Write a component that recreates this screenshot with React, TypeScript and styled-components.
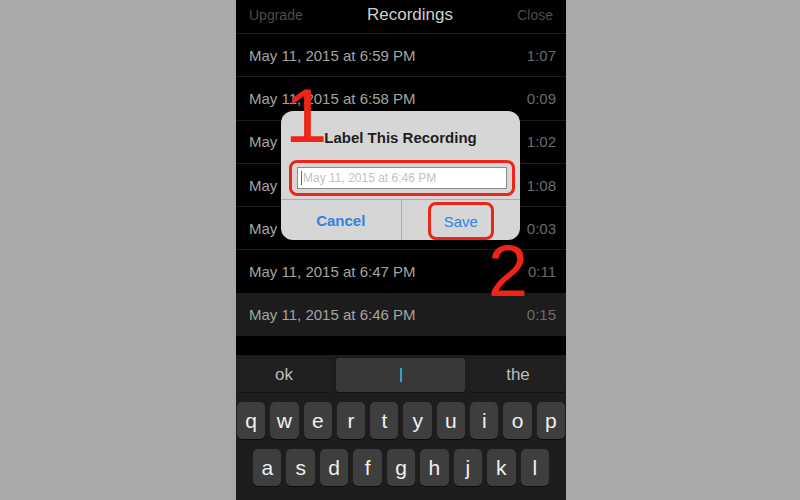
import React from "react";
import styled, { createGlobalStyle } from "styled-components";

const GlobalStyle = createGlobalStyle`
  html, body {
    margin: 0;
    padding: 0;
    background: #a9a9a9;
    font-family: "Liberation Sans", Arial, sans-serif;
  }
`;

const RED = "#ee2419";
const BLUE = "#2f82de";

const recordings = [
  { date: "May 11, 2015 at 6:59 PM", time: "1:07" },
  { date: "May 11, 2015 at 6:58 PM", time: "0:09" },
  { date: "May 11, 2015 at 6:57 PM", time: "1:02" },
  { date: "May 11, 2015 at 6:55 PM", time: "1:08" },
  { date: "May 11, 2015 at 6:50 PM", time: "0:03" },
  { date: "May 11, 2015 at 6:47 PM", time: "0:11" },
  { date: "May 11, 2015 at 6:46 PM", time: "0:15", active: true },
];

const topKeys = ["q", "w", "e", "r", "t", "y", "u", "i", "o", "p"];
const midKeys = ["a", "s", "d", "f", "g", "h", "j", "k", "l"];

const Page = styled.div`
  width: 800px;
  height: 500px;
  overflow: hidden;
  display: flex;
`;

const Phone = styled.div`
  position: relative;
  margin-left: 236px;
  width: 330px;
  height: 500px;
  background: #000;
  display: flex;
  flex-direction: column;
  overflow: hidden;
`;

const Header = styled.div`
  height: 29px;
  padding: 0 13px 4px;
  display: flex;
  align-items: center;
  justify-content: space-between;
`;

const NavLink = styled.span`
  color: #4b4b4b;
  font-size: 14px;
`;

const Title = styled.span`
  color: #cfcfcf;
  font-size: 17px;
`;

const List = styled.div`
  display: flex;
  flex-direction: column;
`;

const Row = styled.div<{ $active?: boolean }>`
  height: 42.3px;
  padding: 0 10px 0 13px;
  display: flex;
  align-items: center;
  justify-content: space-between;
  border-top: 1px solid #1b1b1b;
  background: ${(p) => (p.$active ? "#1c1c1c" : "transparent")};
`;

const DateText = styled.span`
  color: #a4a4a4;
  font-size: 15px;
`;

const Duration = styled.span`
  color: #6b6b6b;
  font-size: 15px;
`;

const Keyboard = styled.div`
  margin-top: auto;
  height: 142px;
  background: #1d1d1d;
  padding-top: 3px;
  display: flex;
  flex-direction: column;
  gap: 10px;
`;

const Suggestions = styled.div`
  display: grid;
  grid-template-columns: 94px 1fr 96px;
  gap: 5px;
  padding: 0 0 0 1px;
  height: 34px;
`;

const Suggestion = styled.div<{ $current?: boolean }>`
  display: flex;
  align-items: center;
  justify-content: center;
  border-radius: 3px;
  background: ${(p) => (p.$current ? "#383838" : "#202020")};
  box-shadow: 0 1px 0 #111;
  color: #bdbdbd;
  font-size: 17px;
`;

const Caret = styled.span`
  width: 2px;
  height: 14px;
  background: #3a9fd0;
`;

const KeyRow = styled.div<{ $cols: number; $pad: number }>`
  display: grid;
  grid-template-columns: repeat(${(p) => p.$cols}, 1fr);
  gap: 5px;
  padding: 0 ${(p) => p.$pad}px;
  height: 37px;
`;

const Key = styled.div`
  display: flex;
  align-items: center;
  justify-content: center;
  border-radius: 5px;
  background: #3e3e3e;
  box-shadow: 0 1px 0 #0c0c0c;
  color: #f0f0f0;
  font-size: 21px;
`;

const Dialog = styled.div`
  position: absolute;
  left: 45px;
  top: 111px;
  width: 239px;
  height: 129px;
  border-radius: 12px;
  background: #d6d6d6;
  display: flex;
  flex-direction: column;
  overflow: hidden;
`;

const DialogTitle = styled.div`
  padding-top: 18px;
  height: 20px;
  text-align: center;
  color: #1e1e1e;
  font-size: 15px;
  font-weight: bold;
`;

const InputFrame = styled.div`
  margin: 11px 5px 0 8px;
  height: 30px;
  border: 3px solid ${RED};
  border-radius: 8px;
  display: flex;
  align-items: center;
  padding: 0 5px;
`;

const Input = styled.div`
  flex: 1;
  height: 20px;
  background: #fff;
  border: 1px solid #8d8d8d;
  display: flex;
  align-items: center;
  padding-left: 3px;
  gap: 1px;
  color: #c2c2c2;
  font-size: 12px;
`;

const InputCaret = styled.span`
  width: 1px;
  height: 14px;
  background: #2f6bd6;
`;

const Buttons = styled.div`
  margin-top: auto;
  height: 40px;
  border-top: 1px solid #adadad;
  display: grid;
  grid-template-columns: 1fr 1fr;
`;

const DialogButton = styled.div<{ $bold?: boolean }>`
  display: flex;
  align-items: center;
  justify-content: center;
  color: ${BLUE};
  font-size: 15px;
  font-weight: ${(p) => (p.$bold ? "bold" : "normal")};
  & + & {
    border-left: 1px solid #adadad;
    align-items: flex-start;
  }
`;

const SaveFrame = styled.span`
  display: flex;
  align-items: center;
  justify-content: center;
  width: 60px;
  height: 32px;
  margin-top: 2px;
  border: 3px solid ${RED};
  border-radius: 8px;
`;

const StepNumber = styled.div<{ $x: number; $y: number; $size: number }>`
  position: absolute;
  left: ${(p) => p.$x}px;
  top: ${(p) => p.$y}px;
  color: ${RED};
  font-size: ${(p) => p.$size}px;
  line-height: 1;
  font-family: "Liberation Sans", Arial, sans-serif;
`;

export default function App() {
  return (
    <Page>
      <GlobalStyle />
      <Phone>
        <Header>
          <NavLink>Upgrade</NavLink>
          <Title>Recordings</Title>
          <NavLink>Close</NavLink>
        </Header>
        <List>
          {recordings.map((r) => (
            <Row key={r.date} $active={r.active}>
              <DateText>{r.date}</DateText>
              <Duration>{r.time}</Duration>
            </Row>
          ))}
        </List>
        <Keyboard>
          <Suggestions>
            <Suggestion>ok</Suggestion>
            <Suggestion $current>
              <Caret />
            </Suggestion>
            <Suggestion>the</Suggestion>
          </Suggestions>
          <KeyRow $cols={10} $pad={1}>
            {topKeys.map((k) => (
              <Key key={k}>{k}</Key>
            ))}
          </KeyRow>
          <KeyRow $cols={9} $pad={17}>
            {midKeys.map((k) => (
              <Key key={k}>{k}</Key>
            ))}
          </KeyRow>
        </Keyboard>

        <Dialog>
          <DialogTitle>Label This Recording</DialogTitle>
          <InputFrame>
            <Input>
              <InputCaret />
              May 11, 2015 at 6:46 PM
            </Input>
          </InputFrame>
          <Buttons>
            <DialogButton $bold>Cancel</DialogButton>
            <DialogButton>
              <SaveFrame>Save</SaveFrame>
            </DialogButton>
          </Buttons>
        </Dialog>

        <StepNumber $x={49} $y={78} $size={76}>
          1
        </StepNumber>
        <StepNumber $x={252} $y={235} $size={72}>
          2
        </StepNumber>
      </Phone>
    </Page>
  );
}
